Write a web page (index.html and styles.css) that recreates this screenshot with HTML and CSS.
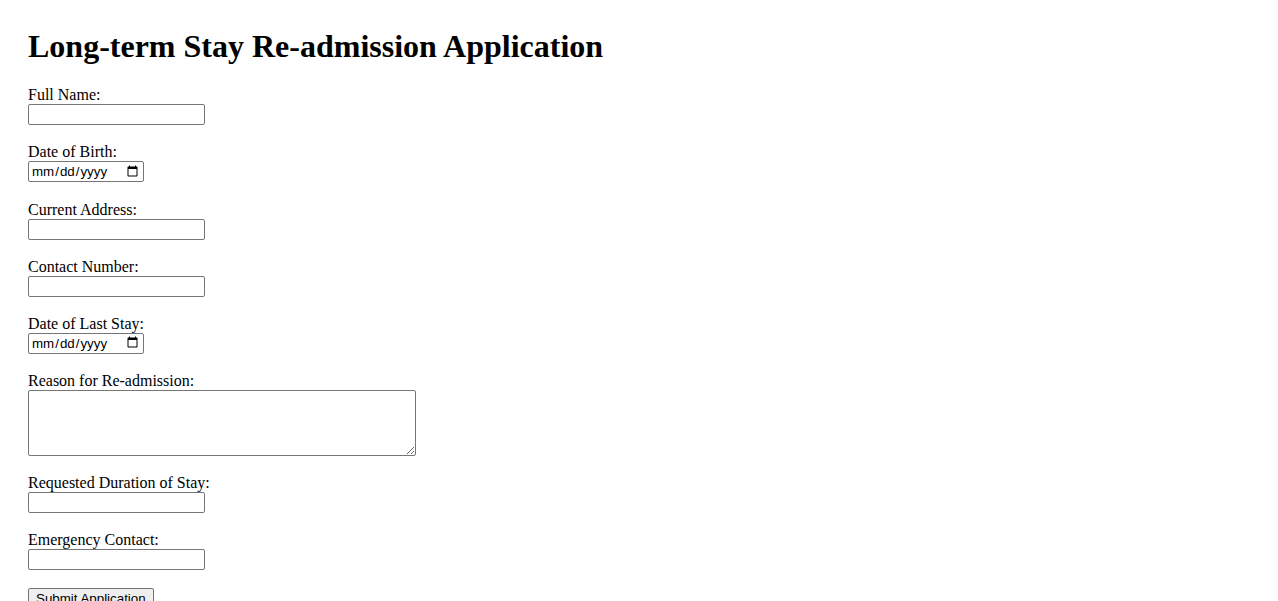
FILE: index.html
```html
<!DOCTYPE html>
<html lang="en">
<head>
<meta charset="utf-8">
<title>Long-term Stay Re-admission Application</title>
<link rel="stylesheet" href="styles.css">
</head>
<body>
<h1 class="title">Long-term Stay Re-admission Application</h1>
<form class="form">
  <div class="field">
    <label class="label" for="name">Full Name:</label>
    <input class="input text" type="text" id="name">
  </div>
  <div class="field field-date">
    <label class="label" for="dob">Date of Birth:</label>
    <input class="input date" type="date" id="dob">
  </div>
  <div class="field">
    <label class="label" for="addr">Current Address:</label>
    <input class="input text" type="text" id="addr">
  </div>
  <div class="field">
    <label class="label" for="phone">Contact Number:</label>
    <input class="input text" type="text" id="phone">
  </div>
  <div class="field field-date">
    <label class="label" for="last">Date of Last Stay:</label>
    <input class="input date" type="date" id="last">
  </div>
  <div class="field">
    <label class="label" for="reason">Reason for Re-admission:</label>
    <textarea class="input area" id="reason"></textarea>
  </div>
  <div class="field">
    <label class="label" for="dur">Requested Duration of Stay:</label>
    <input class="input text" type="text" id="dur">
  </div>
  <div class="field">
    <label class="label" for="emerg">Emergency Contact:</label>
    <input class="input text" type="text" id="emerg">
  </div>
  <button class="submit" type="submit">Submit Application</button>
</form>
</body>
</html>
```

FILE: styles.css
```css
html, body {
  background: #ffffff;
}
body {
  margin: 0;
  padding: 28px;
  font-family: "Liberation Serif", "Times New Roman", serif;
  font-size: 16px;
  color: #000000;
}
.title {
  margin: 0 0 21px 0;
  font-size: 32px;
  font-weight: bold;
  line-height: 37px;
}
.form {
  display: flex;
  flex-direction: column;
  align-items: flex-start;
}
.field {
  display: flex;
  flex-direction: column;
  align-items: flex-start;
  margin-bottom: 18px;
}
.field-date {
  margin-bottom: 18.5px;
}
.label {
  display: block;
  line-height: 18px;
  height: 18px;
}
.input {
  box-sizing: border-box;
  margin: 0;
  border: 1px solid #767676;
  border-radius: 2px;
  background: #ffffff;
  font-family: "Liberation Sans", Arial, sans-serif;
  font-size: 13.333px;
  color: #000000;
}
.text {
  width: 177px;
  height: 21px;
  padding: 1px 2px;
}
.date {
  width: 116px;
  height: 21px;
  padding: 1px 2px;
}
.area {
  width: 388px;
  height: 66px;
  padding: 2px;
  resize: both;
  font-family: "Liberation Mono", monospace;
}
.submit {
  box-sizing: border-box;
  margin: 0;
  height: 21px;
  padding: 1px 7px;
  border: 1px solid #767676;
  border-radius: 2px;
  background: #efefef;
  font-family: "Liberation Sans", Arial, sans-serif;
  font-size: 13.333px;
  color: #000000;
}
```
